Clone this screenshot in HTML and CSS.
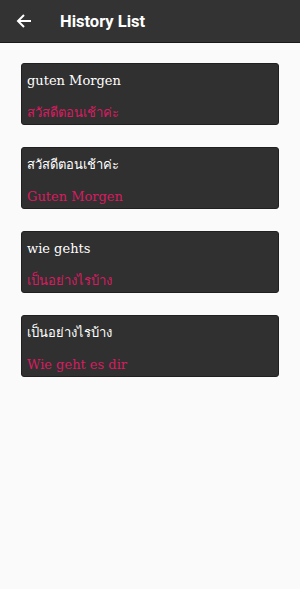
FILE: index.html
```html
<!DOCTYPE html>
<html lang="en">
  <head>
    <meta charset="utf-8">
    <link rel="stylesheet" href="styles.css">
  </head>
  <body>
    <div class="app-bar">
      <svg class="back-icon" width="16" height="16" viewBox="0 0 16 16">
        <path d="M15 8H2M8 2L2 8l6 6" fill="none" stroke="#fff" stroke-width="2"/>
      </svg>
      <span class="app-title">History List</span>
    </div>

    <div class="history-list">
      <div class="history-card">
        <div class="src-text">guten Morgen</div>
        <div class="dst-text">สวัสดีตอนเช้าค่ะ</div>
      </div>
      <div class="history-card">
        <div class="src-text">สวัสดีตอนเช้าค่ะ</div>
        <div class="dst-text">Guten Morgen</div>
      </div>
      <div class="history-card">
        <div class="src-text">wie gehts</div>
        <div class="dst-text">เป็นอย่างไรบ้าง</div>
      </div>
      <div class="history-card">
        <div class="src-text">เป็นอย่างไรบ้าง</div>
        <div class="dst-text">Wie geht es dir</div>
      </div>
    </div>
  </body>
</html>
```

FILE: styles.css
```css
body {
  margin: 0;
  padding: 0;
  background-color: #fafafa;
  font-family: "DejaVu Serif", "Noto Sans", serif;
}

div.app-bar {
  height: 42px;
  background-color: #333333;
  border-bottom: 1px solid #1a1a1a;
  display: flex;
  align-items: center;
  color: #ffffff;
}

.back-icon {
  margin-left: 16px;
  display: block;
}

span.app-title {
  margin-left: 28px;
  font-family: Roboto, "Liberation Sans", sans-serif;
  font-weight: 700;
  font-size: 16.5px;
}

div.history-list {
  display: flex;
  flex-direction: column;
  gap: 22px;
  padding: 20px 21px 0 21px;
}

div.history-card {
  height: 62px;
  box-sizing: border-box;
  background-color: #303030;
  border: 1px solid #202020;
  border-radius: 3px;
  padding: 7px 5px 0 5px;
}

div.src-text {
  color: #ffffff;
  font-size: 13px;
  line-height: 20px;
}

div.dst-text {
  color: #d81b60;
  font-size: 13px;
  line-height: 20px;
  margin-top: 12px;
}
```
